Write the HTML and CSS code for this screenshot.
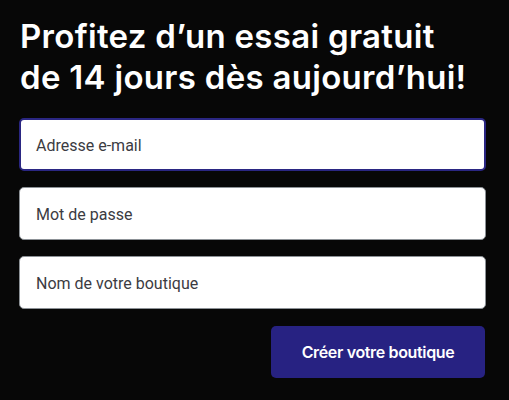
FILE: index.html
```html
<!DOCTYPE html>
<html lang="fr">
<head>
<meta charset="utf-8">
<link rel="stylesheet" href="styles.css">
</head>
<body>
<main class="signup">
  <h1 class="title">Profitez d’un essai gratuit<br>de 14 jours dès aujourd’hui!</h1>
  <form class="form">
    <div class="field field--focus"><span class="placeholder">Adresse e-mail</span></div>
    <div class="field"><span class="placeholder">Mot de passe</span></div>
    <div class="field"><span class="placeholder">Nom de votre boutique</span></div>
    <div class="actions">
      <button type="button" class="btn">Créer votre boutique</button>
    </div>
  </form>
</main>
</body>
</html>
```
FILE: styles.css
```css
html, body {
  margin: 0;
  padding: 0;
  background: #070707;
}
body {
  width: 509px;
  height: 400px;
  overflow: hidden;
  font-family: Inter, "Noto Sans", sans-serif;
}
.signup {
  padding: 16px 23px 0 19px;
}
.title {
  margin: 0 0 0 1px;
  color: #ffffff;
  font-size: 33px;
  line-height: 41px;
  font-weight: 600;
  letter-spacing: 0.3px;
  white-space: nowrap;
}
.form {
  margin-top: 20px;
  display: flex;
  flex-direction: column;
  gap: 16px;
}
.field {
  height: 51px;
  background: #ffffff;
  border: 1px solid #8c9196;
  border-radius: 5px;
  display: flex;
  align-items: center;
  padding: 2px 16px 0;
  box-sizing: content-box;
}
.field:not(.field--focus) {
  height: 49px;
}
.field--focus {
  border: 2px solid #2a2682;
  padding: 2px 15px 0;
  height: 47px;
}
.placeholder {
  color: #3b3b42;
  font-family: Roboto, "Noto Sans", sans-serif;
  font-size: 16px;
}
.actions {
  display: flex;
  justify-content: flex-end;
  margin-top: 1px;
}
.btn {
  width: 214px;
  height: 52px;
  border: 0;
  border-radius: 5px;
  background: #272282;
  color: #ffffff;
  font-family: Inter, "Noto Sans", sans-serif;
  font-size: 16px;
  font-weight: 600;
  letter-spacing: -0.35px;
  margin-right: 1px;
}
```
